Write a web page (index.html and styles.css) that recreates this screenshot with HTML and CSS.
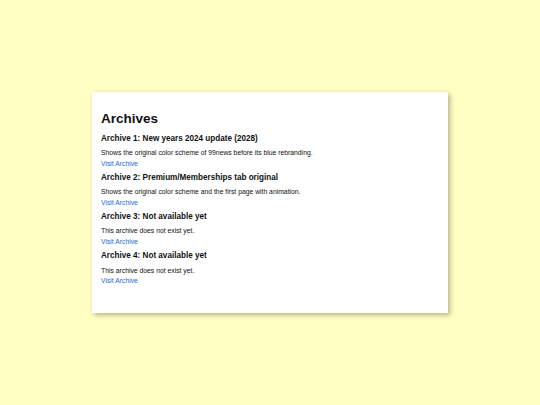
FILE: index.html
```html
<!DOCTYPE html>
<html lang="en">
<head>
<meta charset="utf-8">
<title>Archives</title>
<link rel="stylesheet" href="styles.css">
</head>
<body>
<main class="card">
  <h1 class="title">Archives</h1>
  <section class="archive">
    <h3 class="archive-name">Archive 1: New years 2024 update (2028)</h3>
    <p class="archive-desc">Shows the original color scheme of 99news before its blue rebranding.</p>
    <a class="archive-link" href="#">Visit Archive</a>
  </section>
  <section class="archive">
    <h3 class="archive-name">Archive 2: Premium/Memberships tab original</h3>
    <p class="archive-desc">Shows the original color scheme and the first page with animation.</p>
    <a class="archive-link" href="#">Visit Archive</a>
  </section>
  <section class="archive">
    <h3 class="archive-name">Archive 3: Not available yet</h3>
    <p class="archive-desc">This archive does not exist yet.</p>
    <a class="archive-link" href="#">Visit Archive</a>
  </section>
  <section class="archive">
    <h3 class="archive-name">Archive 4: Not available yet</h3>
    <p class="archive-desc">This archive does not exist yet.</p>
    <a class="archive-link" href="#">Visit Archive</a>
  </section>
</main>
</body>
</html>
```
FILE: styles.css
```css
html, body {
  margin: 0;
  padding: 0;
}
body {
  background: #ffffc4;
  font-family: "Liberation Sans", Arial, sans-serif;
  color: #111;
  height: 100vh;
  display: flex;
  align-items: center;
  justify-content: center;
}
.card {
  width: 356px;
  box-sizing: border-box;
  background: #fff;
  padding: 18.8px 9px 28.7px;
  box-shadow: 2px 2px 5px rgba(0, 0, 0, 0.3);
  display: flex;
  flex-direction: column;
}
.title {
  font-size: 13.5px;
  font-weight: bold;
  margin: 0 0 8.3px;
}
.archive {
  display: flex;
  flex-direction: column;
  align-items: flex-start;
  margin-bottom: 5.8px;
}
.archive:last-child {
  margin-bottom: 0;
}
.archive-name {
  font-size: 8.15px;
  font-weight: bold;
  margin: 0 0 6.4px;
}
.archive-desc {
  font-size: 6.8px;
  margin: 0 0 3.9px;
}
.archive-link {
  font-size: 6.8px;
  color: #1a6bd0;
  text-decoration: none;
}
```
